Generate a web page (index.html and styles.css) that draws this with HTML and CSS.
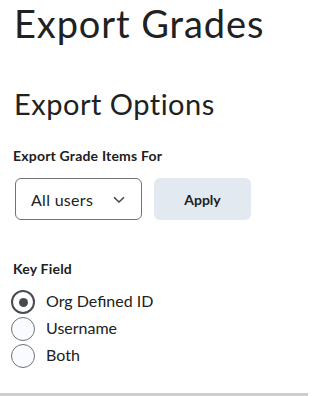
FILE: index.html
```html
<!DOCTYPE html>
<html>
<head>
<meta charset="utf-8">
<link rel="stylesheet" href="styles.css">
</head>
<body>
<div class="page">
  <h1 class="title">Export Grades</h1>
  <h2 class="subtitle">Export Options</h2>
  <div class="field-label">Export Grade Items For</div>
  <div class="controls">
    <div class="select">
      <span class="select-text">All users</span>
      <svg class="chevron" width="12" height="8" viewBox="0 0 12 8"><path d="M1.5 1.75 L6 6 L10.5 1.75" fill="none" stroke="#494c4e" stroke-width="1.7" stroke-linecap="round" stroke-linejoin="round"/></svg>
    </div>
    <button class="apply">Apply</button>
  </div>
  <div class="field-label key">Key Field</div>
  <div class="radios">
    <label class="radio-row"><span class="radio checked"><span class="dot"></span></span><span class="radio-text">Org Defined ID</span></label>
    <label class="radio-row"><span class="radio"></span><span class="radio-text">Username</span></label>
    <label class="radio-row"><span class="radio"></span><span class="radio-text">Both</span></label>
  </div>
</div>
<div class="footer-line"></div>
</body>
</html>
```
FILE: styles.css
```css
html, body {
  margin: 0;
  padding: 0;
  background: #ffffff;
}
body {
  font-family: Lato, "Noto Sans", sans-serif;
  color: #202122;
  width: 308px;
  height: 396px;
  overflow: hidden;
}
.page {
  padding: 0 0 0 13px;
  height: 393px;
  box-sizing: border-box;
}
.title {
  margin: 0;
  padding-left: 1px;
  font-size: 38px;
  font-weight: 400;
  line-height: 46px;
  letter-spacing: 0.9px;
}
.subtitle {
  margin: 0;
  padding-top: 40px;
  padding-left: 1px;
  font-size: 29px;
  font-weight: 400;
  line-height: 36px;
  letter-spacing: 0.5px;
}
.field-label {
  margin-top: 26px;
  font-size: 14px;
  font-weight: 700;
  line-height: 16px;
  letter-spacing: 0.2px;
}
.controls {
  display: flex;
  gap: 12px;
  margin-top: 14px;
  padding-left: 2px;
}
.select {
  width: 127px;
  height: 42px;
  box-sizing: border-box;
  border: 1px solid #6e7477;
  border-radius: 6px;
  display: flex;
  align-items: center;
  justify-content: space-between;
  padding: 0 16px 0 15px;
}
.select-text {
  font-size: 16px;
  letter-spacing: 0.3px;
  color: #202122;
}
.chevron {
  margin-top: 2px;
}
.apply {
  width: 97px;
  height: 42px;
  border: none;
  border-radius: 6px;
  background: #e3e9f1;
  font-family: Lato, "Noto Sans", sans-serif;
  font-size: 14px;
  font-weight: 700;
  color: #202122;
  padding: 0;
}
.key {
  margin-top: 41px;
}
.radios {
  margin-top: 13px;
  margin-left: -2px;
  display: flex;
  flex-direction: column;
  gap: 3px;
}
.radio-row {
  display: flex;
  align-items: flex-start;
  gap: 11px;
  height: 24px;
}
.radio {
  width: 24px;
  height: 24px;
  flex: none;
  box-sizing: border-box;
  border: 1px solid #6e7477;
  border-radius: 50%;
  background: #f9fbff;
  display: flex;
  align-items: center;
  justify-content: center;
}
.radio.checked {
  border: 2px solid #494c4e;
  background: #ffffff;
}
.dot {
  width: 9px;
  height: 9px;
  border-radius: 50%;
  background: #494c4e;
}
.radio-text {
  font-size: 16px;
  line-height: 21px;
  color: #202122;
}
.footer-line {
  height: 3px;
  background: #cdcdcd;
}
```
